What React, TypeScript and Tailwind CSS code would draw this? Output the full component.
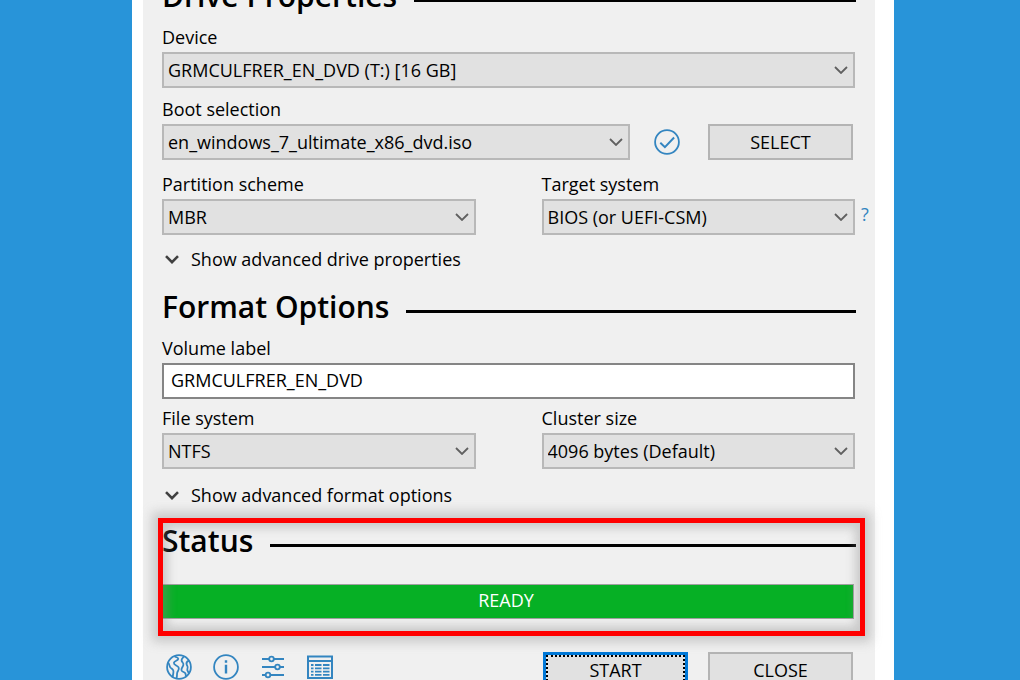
import type { ReactNode } from "react";

function SectionHeading({ children }: { children: ReactNode }) {
  return (
    <div className="flex h-9 items-center gap-[17px]">
      <h2 className="pt-px text-[30px] leading-9 font-semibold whitespace-nowrap">{children}</h2>
      <span className="mt-[10px] h-[3px] flex-1 bg-black" />
    </div>
  );
}

function Label({ id, children }: { id: string; children: ReactNode }) {
  return (
    <label htmlFor={id} className="mb-[3px] block h-6 leading-6 whitespace-nowrap">
      {children}
    </label>
  );
}

function SelectField({ id, label, value }: { id: string; label: string; value: string }) {
  return (
    <div className="min-w-0 flex-1">
      <Label id={id}>{label}</Label>
      <div className="grid items-center">
        <select
          id={id}
          className="col-start-1 row-start-1 h-9 w-full appearance-none border-2 border-[#b8b8b8] bg-[#e1e1e1] pr-8 pl-1"
        >
          <option>{value}</option>
        </select>
        <svg
          viewBox="0 0 14 8"
          className="pointer-events-none col-start-1 row-start-1 mr-[7px] h-2 w-3.5 justify-self-end"
          fill="none"
          stroke="#606060"
          strokeWidth="1.8"
        >
          <path d="M1 1l6 6 6-6" />
        </svg>
      </div>
    </div>
  );
}

function Disclosure({ children }: { children: ReactNode }) {
  return (
    <button className="flex h-6 items-center gap-3 pl-[3px] leading-6 whitespace-nowrap">
      <svg viewBox="0 0 14 9" className="h-[9px] w-3.5" fill="none" stroke="#404040" strokeWidth="2.6">
        <path d="M1 1.2l6 6 6-6" />
      </svg>
      {children}
    </button>
  );
}

const plainButton = "h-9 w-[145px] shrink-0 border-2 border-[#b4b4b4] bg-[#e1e1e1]";
const iconStroke = { fill: "none", stroke: "#3385c0", strokeWidth: 1.8 };

function CheckIcon() {
  return (
    <svg viewBox="0 0 26 26" className="size-[26px] shrink-0" {...iconStroke} role="img" aria-label="Verify">
      <circle cx="13" cy="13" r="11.9" />
      <path d="M6.3 13.7l4.6 4.4 9.2-9.6" strokeWidth="2" />
    </svg>
  );
}

function GlobeIcon() {
  return (
    <svg viewBox="0 0 26 26" className="size-[26px]" {...iconStroke}>
      <circle cx="13" cy="13" r="11.9" />
      <path d="M8.5 2.2c1.200 1.400 3.800.8 3.700 2.600-.2 2-3.800 1.800-4.300 4-.5 2.300 3.700 2.600 4.700 4.600 1 2-.6 3.300-1.300 5-.7 1.800.2 3.600-.9 6M2 8.500c1.500 1 1.200 3.600 2.400 5 1.200 1.300 2.800 1.600 3 3.500.2 2-.4 3.800-.8 6.300M18 2.400c-1.800 1.800-3 3-2.300 4.600.7 1.500 2.300 2 1.600 4.200-.7 2.100-2.200 3.300-1.800 5 .5 1.900 2.800 1.600 3.800 3 .6.900.2 2 .9 3.200M22.800 6.600c-2 1-2.800 2.400-2.100 4 .6 1.500 1.700 2.200.7 4.200-.7 1.500.6 2.600 1.400 4.300" />
    </svg>
  );
}

function InfoIcon() {
  return (
    <svg viewBox="0 0 26 26" className="size-[26px]" {...iconStroke}>
      <circle cx="13" cy="13" r="11.9" />
      <path d="M13 10.800v8.600M13 6.200v2.500" strokeWidth="2.400" />
    </svg>
  );
}

function SlidersIcon() {
  return (
    <svg viewBox="0 0 26 26" className="size-[26px]" {...iconStroke}>
      <path d="M2 5h7M14 5h10M2 13h13M20 13h4M2 21h3.500M10.500 21h13.500" strokeWidth="2" />
      <circle cx="11.500" cy="5" r="2.300" />
      <circle cx="17.500" cy="13" r="2.300" />
      <circle cx="8" cy="21" r="2.300" />
    </svg>
  );
}

function LogIcon() {
  return (
    <svg viewBox="0 0 26 24" className="h-6 w-[26px]" {...iconStroke}>
      <path d="M1 1.500h24v21.500H1zM1 6h24" strokeWidth="2" />
      <path d="M4 10h2.500M8 10h6.500M16 10h6.500M4 13.300h2.500M8 13.300h6.500M16 13.300h6.500M4 16.600h2.500M8 16.600h6.500M16 16.600h6.500M4 19.900h2.500M8 19.900h6.500M16 19.900h6.500" />
    </svg>
  );
}

const tools = [
  { name: "Language", icon: <GlobeIcon /> },
  { name: "About", icon: <InfoIcon /> },
  { name: "Settings", icon: <SlidersIcon /> },
  { name: "Log", icon: <LogIcon /> },
];

export default function App() {
  return (
    <div className="h-screen overflow-hidden bg-[#2894d9] pr-[126px] pl-[132px] font-['Open_Sans',sans-serif] text-[18px] text-black">
      <div className="h-full bg-white pr-[19px] pl-[11px]">
        <main className="flow-root h-full bg-[#f0f0f0] px-[19px]">
          <section className="-mt-[23px]">
            <SectionHeading>Drive Properties</SectionHeading>
            <div className="mt-3 flex pr-px">
              <SelectField id="device" label="Device" value="GRMCULFRER_EN_DVD (T:) [16 GB]" />
            </div>
            <div className="mt-[9px] flex items-end pr-[3px]">
              <SelectField id="boot" label="Boot selection" value="en_windows_7_ultimate_x86_dvd.iso" />
              <div className="flex h-9 items-center pr-[28px] pl-6">
                <CheckIcon />
              </div>
              <button className={plainButton}>SELECT</button>
            </div>
            <div className="mt-3 flex gap-[66px] pr-px">
              <SelectField id="partition" label="Partition scheme" value="MBR" />
              <div className="relative flex min-w-0 flex-1">
                <SelectField id="target" label="Target system" value="BIOS (or UEFI-CSM)" />
                <a href="#target" className="absolute top-[30px] left-full ml-[6px] text-[18px] leading-6 text-[#3385c0]">
                  ?
                </a>
              </div>
            </div>
            <div className="mt-3">
              <Disclosure>Show advanced drive properties</Disclosure>
            </div>
          </section>

          <section className="mt-[17px]">
            <SectionHeading>Format Options</SectionHeading>
            <div className="mt-3 pr-px">
              <Label id="volume">Volume label</Label>
              <input
                id="volume"
                defaultValue="GRMCULFRER_EN_DVD"
                className="block h-9 w-full border-2 border-[#858585] bg-white px-[7px] pb-[2px]"
              />
            </div>
            <div className="mt-[7px] flex gap-[66px] pr-px">
              <SelectField id="fs" label="File system" value="NTFS" />
              <SelectField id="cluster" label="Cluster size" value="4096 bytes (Default)" />
            </div>
            <div className="mt-3.5">
              <Disclosure>Show advanced format options</Disclosure>
            </div>
          </section>

          <section className="relative mt-[15px]">
            <SectionHeading>Status</SectionHeading>
            <div
              role="status"
              className="mt-[26px] mr-[2px] flex h-[35px] items-center justify-center border border-[#a0a0a0] bg-[#06b025] pr-1 pb-[3px] text-white"
            >
              READY
            </div>
            <div className="pointer-events-none absolute -top-1 -right-[9px] -bottom-[17px] -left-1 border-[5px] border-[#ff0000] shadow-[0_0_10px_6px_rgba(140,140,140,0.38),inset_0_0_10px_5px_rgba(140,140,140,0.38)]" />
          </section>

          <footer className="mt-[33px] flex items-start gap-5 pr-[3px]">
            <div className="flex flex-1 items-center gap-[21px] pt-[2px] pl-1">
              {tools.map((tool) => (
                <button key={tool.name} aria-label={tool.name}>
                  {tool.icon}
                </button>
              ))}
            </div>
            <button className="h-9 w-[145px] shrink-0 border-[3px] border-[#0078d7] bg-[#e1e1e1]">
              <span className="flex h-full items-center justify-center border-2 border-dotted border-black">START</span>
            </button>
            <button className={plainButton}>CLOSE</button>
          </footer>
        </main>
      </div>
    </div>
  );
}
